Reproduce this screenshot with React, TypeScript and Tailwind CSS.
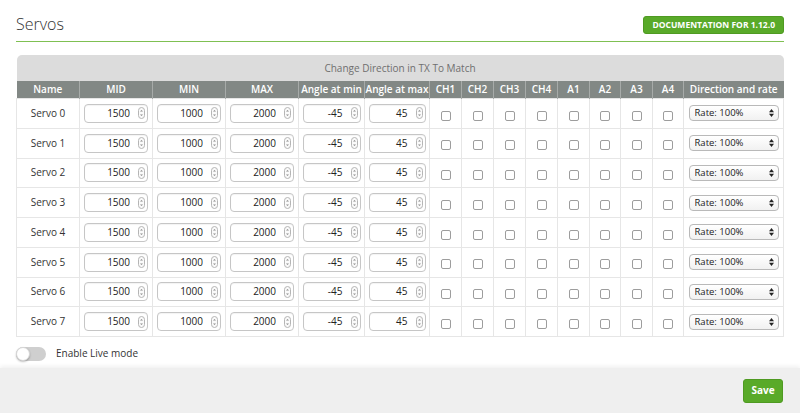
import React from 'react';

const servos = [0, 1, 2, 3, 4, 5, 6, 7];
const channels = ['CH1', 'CH2', 'CH3', 'CH4', 'A1', 'A2', 'A3', 'A4'];

function Spinner() {
  return (
    <svg width="7" height="12" viewBox="0 0 7 12" className="shrink-0">
      <rect x="0.5" y="0.5" width="6" height="11" rx="3" fill="#fafafa" stroke="#b5b5b5" />
      <path d="M2 4.6L3.5 3L5 4.6Z" fill="#8a8a8a" />
      <path d="M2 7.4L3.5 9L5 7.4Z" fill="#8a8a8a" />
    </svg>
  );
}

function NumberBox({ value, width }: { value: string; width: string }) {
  return (
    <div
      className={`mx-auto flex h-[19px] items-center justify-end rounded-[4px] border border-[#c6c6c6] bg-white pr-[2px] shadow-[inset_0_1px_1px_rgba(0,0,0,0.05)] ${width}`}
    >
      <input
        readOnly
        value={value}
        className="w-full min-w-0 bg-transparent pr-[8px] text-right text-[10px] text-[#222] outline-none"
      />
      <Spinner />
    </div>
  );
}

function RateSelect() {
  return (
    <div className="relative mx-auto h-[16px] w-[90px]">
      <select className="h-full w-full appearance-none rounded-[4px] border border-[#b9b9b9] bg-gradient-to-b from-white to-[#f1f1f1] pl-[5px] text-[9.5px] font-medium text-[#222] outline-none">
        <option>Rate: 100%</option>
      </select>
      {/* up/down arrows of the select */}
      <svg width="5" height="8" viewBox="0 0 5 8" className="pointer-events-none absolute right-[5px] top-[4px]">
        <path d="M0 3.3L2.5 0L5 3.3Z" fill="#222" />
        <path d="M0 4.7L2.5 8L5 4.7Z" fill="#222" />
      </svg>
    </div>
  );
}

export default function App() {
  return (
    <div className="flex h-[413px] w-[800px] flex-col bg-white font-['Open_Sans',sans-serif] text-[#333]">
      <div className="flex-1 px-4 pt-[14px]">
        {/* Header */}
        <div className="flex items-center justify-between pb-[6px]">
          <h1 className="text-[16px] font-light leading-[21px] text-[#333]">Servos</h1>
          <a className="rounded-[3px] border border-[#4f9a22] bg-[#59aa29] px-[8px] py-[2px] text-[8.5px] font-bold leading-[12px] text-white">
            DOCUMENTATION FOR 1.12.0
          </a>
        </div>
        <div className="h-px bg-[#7fc052]" />

        {/* Table */}
        <table className="mt-[13px] w-[767px] table-fixed border-collapse text-[10px]">
          <colgroup>
            <col className="w-[63px]" />
            <col className="w-[73px]" />
            <col className="w-[73px]" />
            <col className="w-[73px]" />
            <col className="w-[66px]" />
            <col className="w-[65px]" />
            <col className="w-[32px]" />
            <col className="w-[32px]" />
            <col className="w-[32px]" />
            <col className="w-[32px]" />
            <col className="w-[32px]" />
            <col className="w-[31px]" />
            <col className="w-[32px]" />
            <col className="w-[31px]" />
            <col className="w-[100px]" />
          </colgroup>
          <thead>
            <tr>
              <th
                colSpan={15}
                className="h-[26px] rounded-t-[5px] bg-[#dcdcdc] text-center text-[10px] font-normal text-[#6f6f6f]"
              >
                Change Direction in TX To Match
              </th>
            </tr>
            <tr className="bg-[#828885] text-white">
              {['Name', 'MID', 'MIN', 'MAX', 'Angle at min', 'Angle at max', ...channels, 'Direction and rate'].map(
                (h) => (
                  <th
                    key={h}
                    className="h-[17px] whitespace-nowrap border-x border-[#a7aba9] p-0 text-[10px] font-semibold leading-[17px] first:border-l-0 last:border-r-0"
                  >
                    {h}
                  </th>
                )
              )}
            </tr>
          </thead>
          <tbody>
            {servos.map((i) => (
              <tr key={i} className="h-[29.75px]">
                <td className="border border-[#e6e6e6] p-0 text-center text-[10px] text-[#333]">Servo {i}</td>
                <td className="border border-[#e6e6e6] p-0">
                  <NumberBox value="1500" width="w-[64px]" />
                </td>
                <td className="border border-[#e6e6e6] p-0">
                  <NumberBox value="1000" width="w-[64px]" />
                </td>
                <td className="border border-[#e6e6e6] p-0">
                  <NumberBox value="2000" width="w-[64px]" />
                </td>
                <td className="border border-[#e6e6e6] p-0">
                  <NumberBox value="-45" width="w-[58px]" />
                </td>
                <td className="border border-[#e6e6e6] p-0">
                  <NumberBox value="45" width="w-[57px]" />
                </td>
                {channels.map((c) => (
                  <td key={c} className="border border-[#e6e6e6] p-0 text-center">
                    <input
                      type="checkbox"
                      className="mt-[3px] h-[10px] w-[10px] appearance-none rounded-[2px] border border-[#9d9d9d] bg-white align-middle"
                    />
                  </td>
                ))}
                <td className="border border-[#e6e6e6] p-0">
                  <RateSelect />
                </td>
              </tr>
            ))}
          </tbody>
        </table>

        {/* Live mode toggle */}
        <div className="mt-[9px] flex items-center gap-[10px]">
          <div className="flex h-[14px] w-[30px] items-center rounded-full bg-[#cfcfcf]">
            <div className="h-[14px] w-[14px] rounded-full border border-[#d6d6d6] bg-white shadow-[0_1px_2px_rgba(0,0,0,0.25)]" />
          </div>
          <span className="text-[10px] text-[#333]">Enable Live mode</span>
        </div>
      </div>

      {/* Footer */}
      <div className="flex h-[45px] items-center justify-end bg-[#efefef] px-[17px] shadow-[0_-2px_4px_rgba(0,0,0,0.06)]">
        <button className="h-[24px] w-[40px] rounded-[3px] border border-[#4f9a22] bg-[#59aa29] text-[10px] font-bold text-white">
          Save
        </button>
      </div>
    </div>
  );
}
